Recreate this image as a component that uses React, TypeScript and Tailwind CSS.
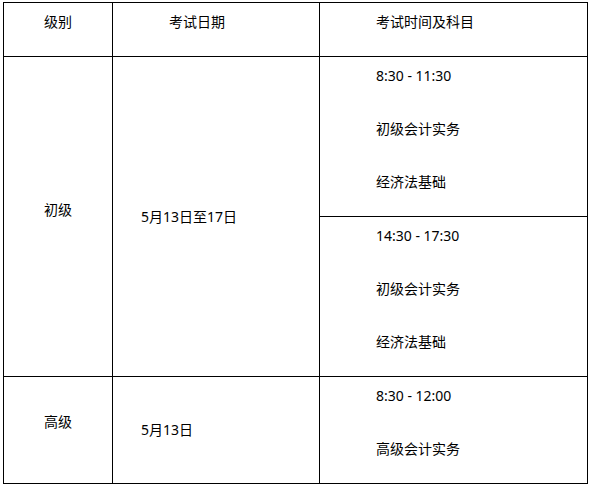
const font = { fontFamily: '"Noto Sans", "Noto Sans CJK SC", sans-serif' };

const Lines = ({ items }: { items: string[] }) => (
  <div className="flex flex-col gap-[33px] pt-[9px] pl-[56px]">
    {items.map((t, i) => (
      <p key={i} className="h-5 leading-5 whitespace-nowrap">
        {t}
      </p>
    ))}
  </div>
);

export default function App() {
  return (
    <div className="bg-white w-[592px] h-[487px] pt-[2px] pl-[3px] text-[14px] text-black" style={font}>
      <div className="grid w-[585px] grid-cols-[108px_206px_267px] grid-rows-[53px_159px_159px_106px] gap-px border border-black bg-black">
        <div className="bg-white pt-[9px] text-center leading-5">级别</div>
        <div className="bg-white pt-[9px] pl-[56px] leading-5">考试日期</div>
        <div className="bg-white pt-[9px] pl-[56px] leading-5">考试时间及科目</div>

        <div className="row-span-2 flex items-center justify-center bg-white pb-[14px] leading-5">初级</div>
        <div className="row-span-2 flex items-center bg-white pl-[28px] leading-5">5月13日至17日</div>
        <div className="bg-white">
          <Lines items={["8:30 - 11:30", "初级会计实务", "经济法基础"]} />
        </div>
        <div className="bg-white">
          <Lines items={["14:30 - 17:30", "初级会计实务", "经济法基础"]} />
        </div>

        <div className="flex items-center justify-center bg-white pb-[16px] leading-5">高级</div>
        <div className="flex items-center bg-white pl-[28px] leading-5">5月13日</div>
        <div className="bg-white">
          <Lines items={["8:30 - 12:00", "高级会计实务"]} />
        </div>
      </div>
    </div>
  );
}
